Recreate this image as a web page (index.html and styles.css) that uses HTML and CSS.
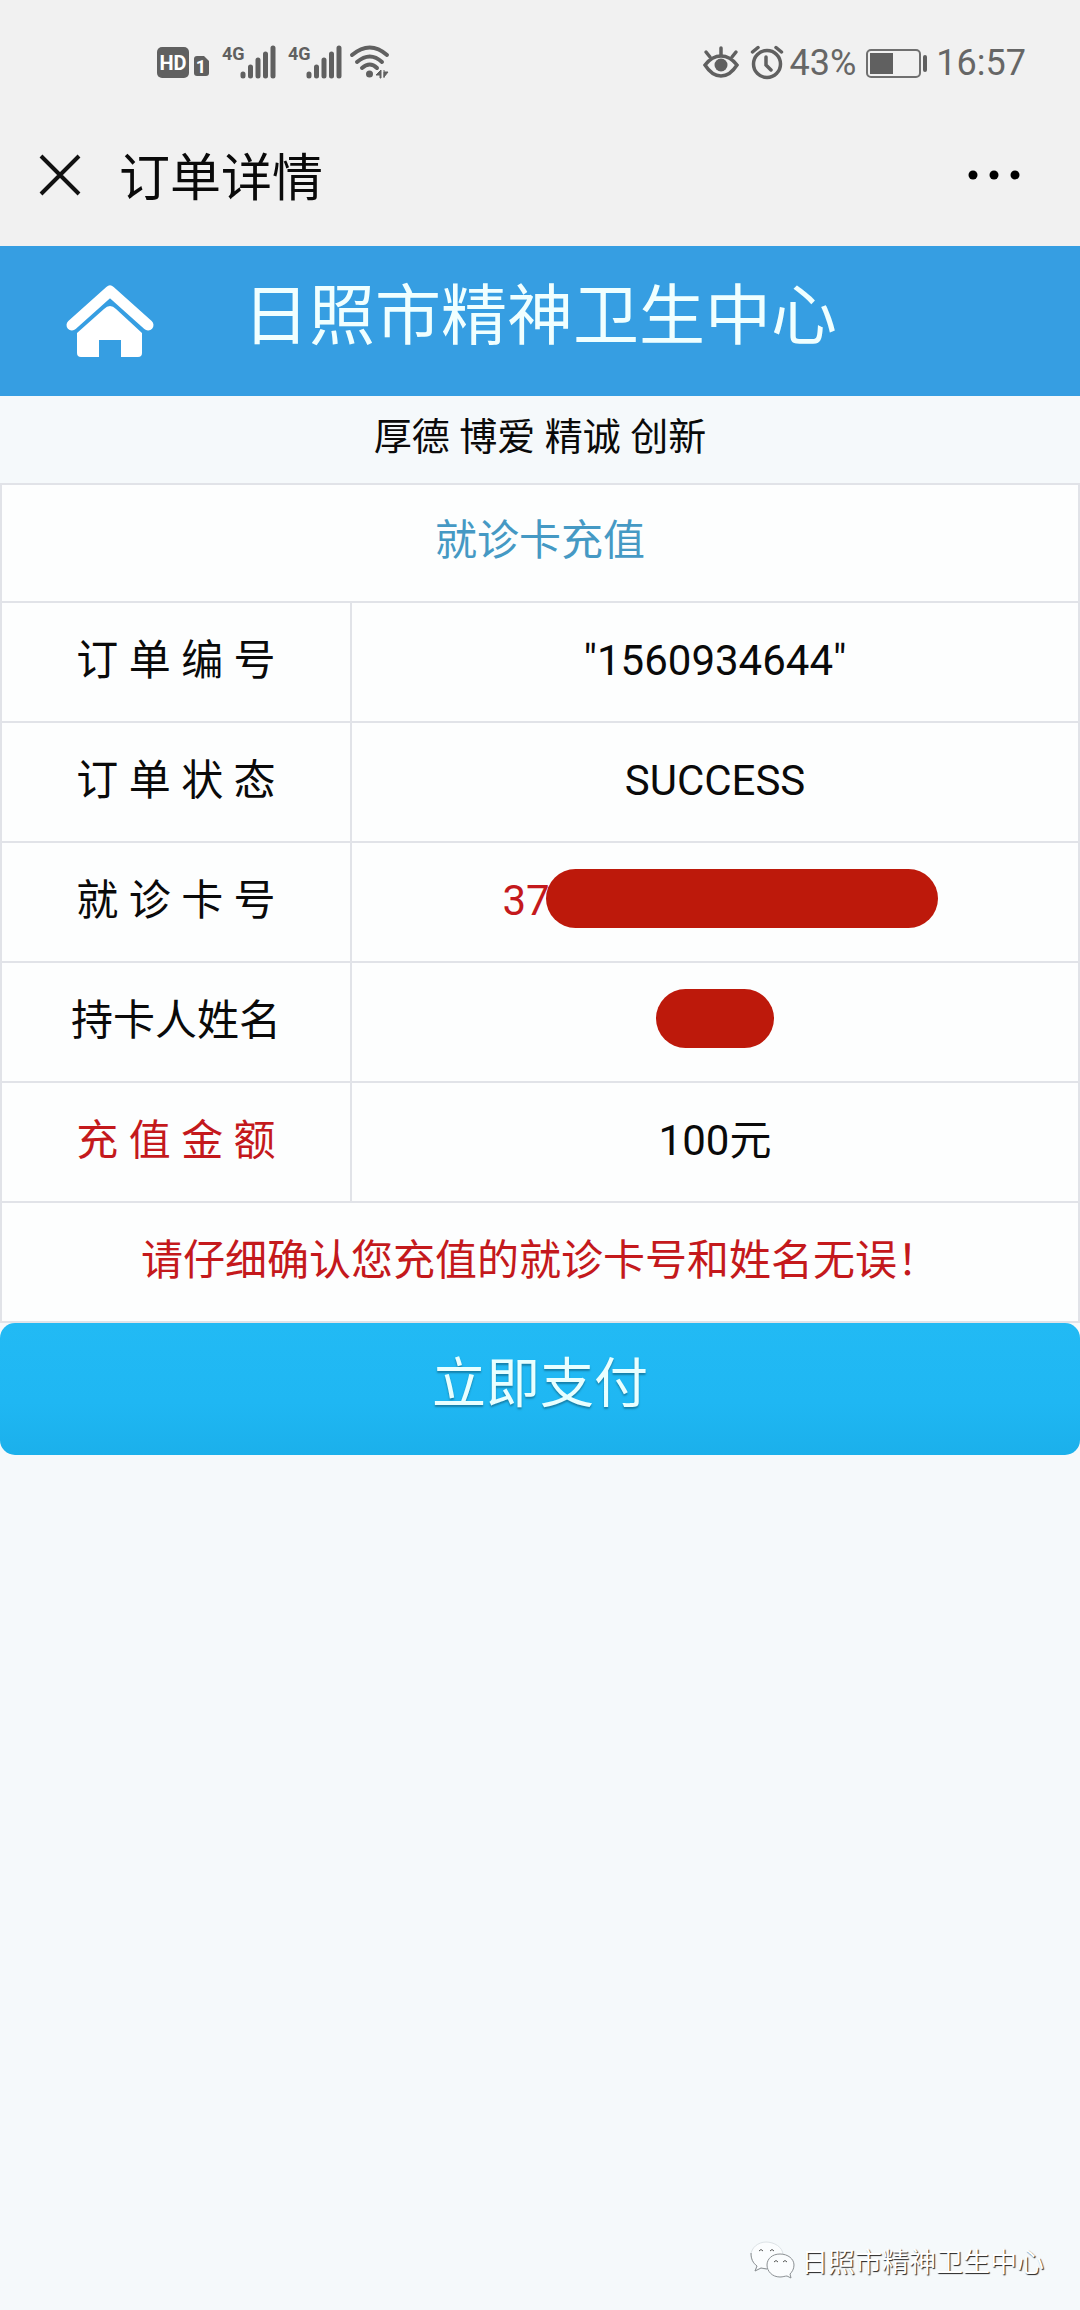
FILE: index.html
```html
<!DOCTYPE html>
<html lang="zh-CN">
<head>
<meta charset="utf-8">
<meta name="viewport" content="width=device-width, initial-scale=1">
<title>订单详情</title>
<link rel="stylesheet" href="styles.css">
</head>
<body>
<div class="status">
  <div class="status-group">
    <svg class="icon" width="53" height="36" viewBox="0 0 53 36" aria-hidden="true">
      <rect x="0" y="2" width="32" height="31" rx="5" fill="#606060"/>
      <text x="16" y="25" class="hd">HD</text>
      <path d="M40 11h7l5 5v12a3 3 0 0 1-3 3H40a3 3 0 0 1-3-3V14a3 3 0 0 1 3-3z" fill="#606060"/>
      <text x="44" y="28" class="sim">1</text>
    </svg>
    <svg class="icon" width="54" height="36" viewBox="0 0 54 36" aria-hidden="true">
      <text x="0" y="15" class="net">4G</text>
      <path d="M21 29v2M28.500 22v9M36 15v16M43.500 9v22M51 3v28" class="bars"/>
    </svg>
    <svg class="icon" width="54" height="36" viewBox="0 0 54 36" aria-hidden="true">
      <text x="0" y="15" class="net">4G</text>
      <path d="M21 29v2M28.500 22v9M36 15v16M43.500 9v22M51 3v28" class="bars"/>
    </svg>
    <svg class="icon icon-wifi" width="40" height="36" viewBox="0 0 40 36" aria-hidden="true">
      <path d="M2 10Q20-5 37 10M7 17Q20 6 32 17M12 23Q20 16 27 23" fill="none" stroke="#606060" stroke-width="4" stroke-linecap="round"/>
      <circle cx="19.500" cy="29" r="3.500" fill="#606060"/>
      <path d="M26 30l5-5v8h-1v-3zM34 25v8M34 27h4l-4 5z" fill="#606060" stroke="#606060"/>
    </svg>
  </div>
  <div class="status-group status-right">
    <svg class="icon" width="38" height="36" viewBox="0 0 38 36" aria-hidden="true">
      <path d="M3 20Q10 11 19 11t16 9Q28 31 19 31T3 20z" fill="none" stroke="#606060" stroke-width="3.500"/>
      <circle cx="19" cy="20" r="6.500" fill="#606060"/>
      <path d="M19 3v7M4 7l4 5M34 7l-4 5" stroke="#606060" stroke-width="3.500" stroke-linecap="round"/>
    </svg>
    <svg class="icon icon-clock" width="34" height="36" viewBox="0 0 34 36" aria-hidden="true">
      <circle cx="17" cy="19" r="13.500" fill="none" stroke="#606060" stroke-width="3.500"/>
      <path d="M2.500 7L8 2.500M31.500 7L26 2.500M16 12v8l5 5" fill="none" stroke="#606060" stroke-width="3.500" stroke-linecap="round"/>
    </svg>
    <span>43%</span>
    <svg class="icon icon-battery" width="62" height="36" viewBox="0 0 62 36" aria-hidden="true">
      <rect x="1" y="5" width="53" height="27" rx="4" fill="none" stroke="#707070" stroke-width="2"/>
      <rect x="4" y="8" width="23" height="21" fill="#606060"/>
      <path d="M59 12v13" stroke="#606060" stroke-width="4" stroke-linecap="round"/>
    </svg>
    <span>16:57</span>
  </div>
</div>
<header class="nav">
  <button class="nav-button" type="button" aria-label="关闭">
    <svg class="icon" width="42" height="42" viewBox="0 0 42 42"><path d="M2 2L40 40M40 2L2 40" stroke="#111" stroke-width="4"/></svg>
  </button>
  <h1 class="nav-title">订单详情</h1>
  <button class="nav-button nav-more" type="button" aria-label="更多">
    <svg class="icon" width="52" height="12" viewBox="0 0 52 12"><g fill="#000"><circle cx="5" cy="6" r="4.500"/><circle cx="26" cy="6" r="4.500"/><circle cx="47" cy="6" r="4.500"/></g></svg>
  </button>
</header>
<div class="banner">
  <a class="home" href="#" aria-label="首页">
    <svg class="icon" width="88" height="74" viewBox="0 0 88 74">
      <path d="M6 41L44 7L82 41" fill="none" stroke="#fff" stroke-width="11" stroke-linecap="round" stroke-linejoin="round"/>
      <path d="M44 22q3 0 6 3l26 24v20q0 4-4 4H55V56H33v17H15q-4 0-4-4V49l27-24q3-3 6-3z" fill="#fff"/>
    </svg>
  </a>
  <h2 class="banner-title">日照市精神卫生中心</h2>
</div>
<p class="slogan">厚德 博爱 精诚 创新</p>
<main>
  <table class="order">
    <colgroup><col class="col-label"><col></colgroup>
    <tbody>
      <tr><th class="order-title" colspan="2">就诊卡充值</th></tr>
      <tr><th scope="row">订 单 编 号</th><td>"1560934644"</td></tr>
      <tr><th scope="row">订 单 状 态</th><td>SUCCESS</td></tr>
      <tr><th scope="row">就 诊 卡 号</th><td class="danger"><div class="masked">37<span class="mask mask-card"></span></div></td></tr>
      <tr><th scope="row">持卡人姓名</th><td><div class="masked"><span class="mask mask-name"></span></div></td></tr>
      <tr><th class="danger" scope="row">充 值 金 额</th><td>100元</td></tr>
      <tr><td class="danger" colspan="2">请仔细确认您充值的就诊卡号和姓名无误！</td></tr>
    </tbody>
  </table>
  <button class="pay" type="button">立即支付</button>
</main>
<footer class="watermark">
  <svg class="icon" width="44" height="40" viewBox="0 0 44 40" aria-hidden="true">
    <g fill="#fbfdfe" stroke="#8b9093" stroke-width="1">
      <path d="M16 2C8 2 1 8 1 15c0 5 2 8 6 11l-2 5 6-3c2 1 5 1 8 1 8 0 14-6 14-14S24 2 16 2z" stroke="#dde3e6"/>
      <path d="M1 13c0 6 2 10 6 13l-2 5 6-3 6 1" fill="none"/>
      <path d="M30 14c-8 0-13 5-13 11s5 12 13 12c3 0 5-1 7-1l4 2-1-4c2-2 4-5 4-9 0-6-6-11-14-11z"/>
      <path d="M9 11q2-3 4 0M20 11q2-3 4 0M24 22q2-3 4 0M33 22q2-3 4 0" fill="none" stroke="#555"/>
    </g>
  </svg>
  <span>日照市精神卫生中心</span>
</footer>
</body>
</html>
```
FILE: styles.css
```css
* {
  box-sizing: border-box;
}

body {
  display: flex;
  flex-direction: column;
  min-height: 100vh;
  margin: 0;
  background: #f5f9fb;
  color: #0a0a0a;
  font-family: Roboto, "Noto Sans CJK SC", sans-serif;
  font-size: 42px;
}

h1, h2, p {
  margin: 0;
  font-weight: 400;
}

button {
  border: 0;
  font: inherit;
}

.icon {
  display: block;
  flex: none;
  overflow: visible;
}

.status {
  display: flex;
  justify-content: space-between;
  align-items: center;
  height: 104px;
  padding: 22px 54px 0 157px;
  background: #f1f1f1;
  color: #666;
  font-size: 36px;
}

.status-group {
  display: flex;
  align-items: center;
  gap: 12px;
}

.icon-wifi {
  margin-left: -4px;
}

.status-right {
  gap: 6px;
}

.icon-clock {
  margin-left: 4px;
}

.icon-battery {
  margin: 0 2px 0 4px;
}

.hd {
  fill: #fff;
  font: 700 20px Roboto, sans-serif;
  text-anchor: middle;
}

.sim {
  fill: #fff;
  font: 700 18px Roboto, sans-serif;
  text-anchor: middle;
}

.net {
  fill: #606060;
  font: 700 18px "Liberation Sans Narrow", Roboto, sans-serif;
}

.bars {
  stroke: #606060;
  stroke-width: 5;
  stroke-linecap: round;
}

.nav {
  display: flex;
  align-items: center;
  height: 142px;
  padding: 0 60px 0 39px;
  background: #f1f1f1;
}

.nav-button {
  padding: 0;
  background: none;
}

.nav-title {
  margin-left: 38px;
  padding-bottom: 2px;
  font-size: 51px;
}

.nav-more {
  margin-left: auto;
}

.banner {
  display: grid;
  grid-template-columns: 1fr auto 1fr;
  align-items: center;
  height: 150px;
  padding: 0 66px;
  background: #369ee2;
  color: #f0ffff;
}

.home {
  justify-self: start;
}

.banner-title {
  padding-bottom: 8px;
  font-size: 66px;
  line-height: 96px;
}

.slogan {
  padding: 13px 0 18px;
  font-size: 38px;
  line-height: 56px;
  text-align: center;
}

.order {
  width: 100%;
  border-collapse: collapse;
  table-layout: fixed;
  background: #fdfefe;
}

.col-label {
  width: 350px;
}

.order th,
.order td {
  height: 120px;
  padding: 0 0 2px;
  border: 2px solid #e1e3e8;
  font-weight: 400;
  line-height: 60px;
  text-align: center;
}

.order .order-title {
  height: 118px;
  padding-bottom: 4px;
  color: #4599c4;
}

.order .danger {
  color: #c4191c;
}

.masked {
  display: flex;
  justify-content: center;
  height: 60px;
}

.mask {
  height: 59px;
  margin-top: -2px;
  border-radius: 30px;
  background: #bd190b;
}

.mask-card {
  width: 392px;
  margin-right: -10px;
  margin-left: -4px;
}

.mask-name {
  width: 118px;
}

.pay {
  display: block;
  width: 100%;
  padding: 22px 0 30px;
  border-radius: 15px;
  background: linear-gradient(#22baf4, #1fb7f3 60%, #1bb0eb);
  color: #e8ffff;
  font-size: 54px;
  line-height: 80px;
  text-shadow: 0 2px 2px #1680aa;
}

.watermark {
  display: flex;
  justify-content: flex-end;
  align-items: center;
  gap: 7px;
  margin-top: auto;
  padding: 0 36px 30px;
  color: #fff;
  font-size: 27px;
  text-shadow: 1px 1px 1px #222;
}
```
